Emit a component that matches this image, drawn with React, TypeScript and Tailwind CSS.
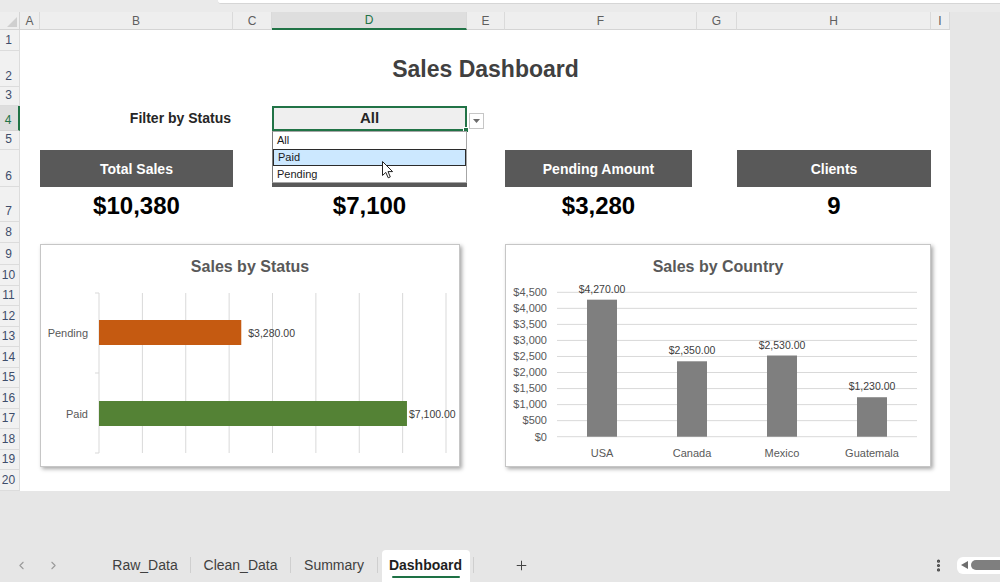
import { ChevronLeft, ChevronRight, Plus, EllipsisVertical } from 'lucide-react';

const COL_HEADERS: { label: string; w: string; active?: boolean }[] = [
  { label: 'A', w: 'w-[20px]' },
  { label: 'B', w: 'w-[193px]' },
  { label: 'C', w: 'w-[39px]' },
  { label: 'D', w: 'w-[195px]', active: true },
  { label: 'E', w: 'w-[38px]' },
  { label: 'F', w: 'w-[192px]' },
  { label: 'G', w: 'w-[40px]' },
  { label: 'H', w: 'w-[194px]' },
  { label: 'I', w: 'w-[19px]' },
];

const ROWS = Array.from({ length: 20 }, (_, i) => i + 1);

const STATUS = [
  { label: 'Pending', value: 3280, color: '#c55a11', y: 76 },
  { label: 'Paid', value: 7100, color: '#548235', y: 157 },
];

const COUNTRIES = [
  { label: 'USA', value: 4270 },
  { label: 'Canada', value: 2350 },
  { label: 'Mexico', value: 2530 },
  { label: 'Guatemala', value: 1230 },
];

const TABS = [
  { label: 'Raw_Data', w: 'w-[90px]' },
  { label: 'Clean_Data', w: 'w-[99px]' },
  { label: 'Summary', w: 'w-[86px]' },
];

const money = (v: number) =>
  '$' + v.toLocaleString('en-US', { minimumFractionDigits: 2, maximumFractionDigits: 2 });

export default function App() {
  return (
    <div className="w-[1000px] h-[586px] flex flex-col bg-[#e6e6e6] overflow-hidden font-['Liberation_Sans',Arial,sans-serif]">
      {/* top strip */}
      <div className="h-[12px] flex shrink-0 bg-[#eaeaea]">
        <div className="w-[218px]" />
        <div className="flex-1 h-[4px] bg-white border-b border-[#d6d6d6] rounded-bl-[3px]" />
      </div>

      {/* column headers */}
      <div className="h-[18px] flex shrink-0">
        <div className="w-[20px] relative bg-[#eeeeee] border-r border-b border-[#d4d4d4]">
          <svg className="absolute right-[2px] bottom-[2px]" width="10" height="10" viewBox="0 0 10 10">
            <path d="M10 0 L10 10 L0 10 Z" fill="#cfcfcf" />
          </svg>
        </div>
        {COL_HEADERS.map((c) => (
          <div
            key={c.label}
            className={
              c.w +
              ' flex items-center justify-center text-[12px] border-r border-[#dadada] ' +
              (c.active
                ? 'bg-[#dedede] text-[#217346] border-b-2 border-b-[#217346]'
                : 'bg-[#eeeeee] text-[#5f5f5f] border-b border-b-[#d4d4d4]')
            }
          >
            {c.label}
          </div>
        ))}
      </div>

      {/* sheet */}
      <div className="flex shrink-0">
        <div className="grid w-[950px] bg-white grid-cols-[20px_20px_193px_39px_195px_38px_192px_40px_194px_19px] grid-rows-[21px_36px_19px_25px_19px_37px_35px_21px_22px_repeat(11,20.5px)]">
          {ROWS.map((n) => (
            <div
              key={n}
              className={
                'col-start-1 flex items-end justify-center pr-[2px] pb-[2px] text-[12px] leading-[16px] border-b ' +
                (n === 4
                  ? 'bg-[#dedede] text-[#217346] border-r-2 border-r-[#217346] border-b-[#d4d4d4]'
                  : 'bg-[#f1f1f1] text-[#3e4d6b] border-r border-[#dcdcdc]')
              }
            >
              {n}
            </div>
          ))}

          <div className="col-start-3 col-end-10 row-start-2 flex items-center justify-center text-[23px] font-bold text-[#404040]">
            Sales Dashboard
          </div>

          <div className="col-start-3 row-start-4 flex items-center justify-end pr-[2px] text-[14px] font-bold text-[#262626]">
            Filter by Status
          </div>

          {/* dropdown cell */}
          <div className="col-start-5 row-start-4 relative z-10 border-2 border-[#217346] bg-[#efefef] flex items-center justify-center text-[15px] font-bold text-[#262626]">
            All
            <div className="absolute -right-[4px] -bottom-[4px] w-[6px] h-[6px] bg-[#217346] border border-white" />
            <div className="absolute left-[195px] top-[5px] w-[15px] h-[16px] bg-white border border-[#c6c6c6] flex items-center justify-center">
              <svg width="7" height="4" viewBox="0 0 7 4">
                <path d="M0 0 L7 0 L3.5 4 Z" fill="#6b6b6b" />
              </svg>
            </div>
            <div className="absolute -left-[2px] top-[23px] w-[195px] h-[52px] bg-white border border-[#a6a6a6] border-l-[#7a7a7a] flex flex-col text-[11px] font-normal text-[#1a1a1a]">
              <div className="h-[17px] flex items-center pl-[4px]">All</div>
              <div className="h-[17px] flex items-center pl-[4px] bg-[#cce8ff] border border-[#2b2b2b]">Paid</div>
              <div className="h-[16px] flex items-center pl-[4px]">Pending</div>
              <svg className="absolute left-[109px] top-[29px]" width="12" height="18" viewBox="0 0 12 18">
                <path
                  d="M0.5 0.5 L0.5 14.5 L3.8 11.4 L6.2 16.8 L8.3 15.9 L6 10.6 L10.6 10.6 Z"
                  fill="white"
                  stroke="#222"
                  strokeWidth="1"
                  strokeLinejoin="round"
                />
              </svg>
            </div>
          </div>

          {/* KPI headers */}
          <KpiHeader label="Total Sales" className="col-start-3 row-start-6" />
          <KpiHeader label="Paid Amount" className="col-start-5 row-start-6" />
          <KpiHeader label="Pending Amount" className="col-start-7 row-start-6 w-[187px]" />
          <KpiHeader label="Clients" className="col-start-9 row-start-6" />

          {/* KPI values */}
          <KpiValue value="$10,380" className="col-start-3 row-start-7" />
          <KpiValue value="$7,100" className="col-start-5 row-start-7" />
          <KpiValue value="$3,280" className="col-start-7 row-start-7 w-[187px]" />
          <KpiValue value="9" className="col-start-9 row-start-7" />

          {/* charts */}
          <div className="col-start-3 col-span-3 row-start-9 row-span-11 mt-[1px] mb-[3px] mr-[7px] bg-white border border-[#c6c6c6] shadow-[2px_2px_4px_rgba(0,0,0,0.35)] flex flex-col">
            <div className="pt-[12px] h-[33px] leading-[20px] text-center text-[16px] font-bold text-[#595959]">
              Sales by Status
            </div>
            <StatusChart />
          </div>

          <div className="col-start-7 col-span-3 row-start-9 row-span-11 mt-[1px] mb-[3px] bg-white border border-[#c6c6c6] shadow-[2px_2px_4px_rgba(0,0,0,0.35)] flex flex-col">
            <div className="pt-[12px] h-[33px] leading-[20px] text-center text-[16px] font-bold text-[#595959]">
              Sales by Country
            </div>
            <CountryChart />
          </div>
        </div>
        <div className="flex-1" />
      </div>

      <div className="flex-1" />

      {/* sheet tabs */}
      <div className="h-[34px] shrink-0 flex items-center text-[14px] text-[#404040]">
        <div className="w-[100px] flex items-center gap-[19px] pl-[15px] text-[#9a9a9a]">
          <ChevronLeft size={13} />
          <ChevronRight size={13} />
        </div>
        {TABS.map((t) => (
          <div key={t.label} className="flex items-center">
            <div className={t.w + ' text-center'}>{t.label}</div>
            <div className="w-px h-[16px] bg-[#cfcfcf]" />
          </div>
        ))}
        <div className="w-[95px] h-full flex justify-center pt-[2px]">
          <div className="w-[88px] h-full bg-white rounded-t-[4px] flex flex-col items-center justify-center gap-[3px] pt-[2px]">
            <span className="font-semibold text-[#1f1f1f] leading-[16px]">Dashboard</span>
            <div className="w-[68px] h-[2px] bg-[#1e7145] rounded" />
          </div>
        </div>
        <div className="w-px h-[16px] bg-[#cfcfcf]" />
        <Plus size={15} strokeWidth={1.6} className="ml-[40px] text-[#444]" />
        <div className="flex-1" />
        <EllipsisVertical size={15} strokeWidth={3} className="text-[#444]" />
        <div className="ml-[11px] w-[43px] h-[17px] bg-white rounded-l-[6px] flex items-center pl-[4px] gap-[3px]">
          <svg width="7" height="8" viewBox="0 0 7 8">
            <path d="M7 0 L7 8 L0 4 Z" fill="#6e6e6e" />
          </svg>
          <div className="flex-1 h-[10px] bg-[#7f7f7f] rounded-l-full" />
        </div>
      </div>
      <div className="h-[4px] shrink-0 bg-white" />
    </div>
  );
}

function KpiHeader({ label, className }: { label: string; className: string }) {
  return (
    <div className={className + ' bg-[#595959] flex items-center justify-center pt-[2px] text-[14px] font-bold text-white'}>
      {label}
    </div>
  );
}

function KpiValue({ value, className }: { value: string; className: string }) {
  return (
    <div className={className + ' flex items-center justify-center pt-[2px] text-[24px] font-bold text-black'}>
      {value}
    </div>
  );
}

function StatusChart() {
  const x0 = 59;
  const step = 43.375;
  const perUnit = step / 1000;
  return (
    <svg width="418" height="188" viewBox="1 34 418 188">
      {Array.from({ length: 9 }, (_, i) => (
        <line key={i} x1={x0 + i * step} x2={x0 + i * step} y1={49} y2={209} stroke="#d9d9d9" strokeWidth="1" />
      ))}
      {[49, 129, 209].map((y) => (
        <line key={y} x1={55} x2={59} y1={y} y2={y} stroke="#d9d9d9" strokeWidth="1" />
      ))}
      {STATUS.map((s) => {
        const w = s.value * perUnit;
        const lx = Math.min(x0 + w + 7, 369);
        return (
          <g key={s.label}>
            <rect x={x0} y={s.y} width={w} height={25} fill={s.color} />
            <text x={lx} y={s.y + 16.5} fontSize="10.5" fill="#404040">
              {money(s.value)}
            </text>
            <text x={48} y={s.y + 16.5} fontSize="11" fill="#595959" textAnchor="end">
              {s.label}
            </text>
          </g>
        );
      })}
    </svg>
  );
}

function CountryChart() {
  const base = 192.7;
  const scale = 144.4 / 4500;
  const yOf = (v: number) => base - v * scale;
  const ticks = Array.from({ length: 10 }, (_, i) => i * 500);
  return (
    <svg width="424" height="188" viewBox="1 34 424 188">
      {ticks.map((t) => (
        <g key={t}>
          <line x1={52} x2={412} y1={yOf(t)} y2={yOf(t)} stroke="#d9d9d9" strokeWidth="1" />
          <text x={42} y={yOf(t) + 3.8} fontSize="11" fill="#595959" textAnchor="end">
            {'$' + t.toLocaleString('en-US')}
          </text>
        </g>
      ))}
      {COUNTRIES.map((c, i) => {
        const cx = 97 + i * 90;
        const top = yOf(c.value);
        return (
          <g key={c.label}>
            <rect x={cx - 15} y={top} width={30} height={base - top} fill="#7f7f7f" />
            <text x={cx} y={top - 7} fontSize="10.5" fill="#404040" textAnchor="middle">
              {money(c.value)}
            </text>
            <text x={cx} y={213} fontSize="11" fill="#595959" textAnchor="middle">
              {c.label}
            </text>
          </g>
        );
      })}
    </svg>
  );
}
